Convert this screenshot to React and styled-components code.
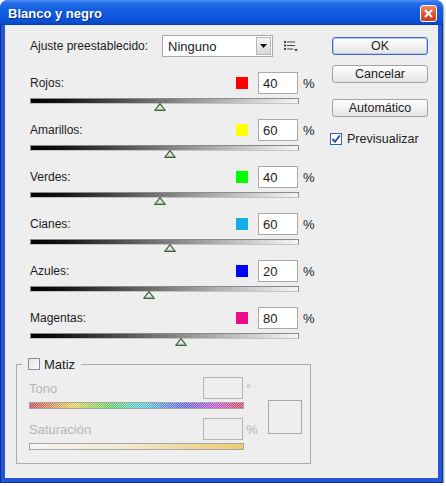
import React from 'react'
import styled, { createGlobalStyle } from 'styled-components'

const GlobalStyle = createGlobalStyle`
    html, body {
        margin: 0;
        background: #fff;
    }
    body {
        font-family: "Liberation Sans", Arial, sans-serif;
        font-size: 12px;
        color: #1c1c1c;
    }
`;

const channels = [
    { name: 'Rojos', color: '#ff0000', value: 40 },
    { name: 'Amarillos', color: '#ffff00', value: 60 },
    { name: 'Verdes', color: '#00ff00', value: 40 },
    { name: 'Cianes', color: '#12aee8', value: 60 },
    { name: 'Azules', color: '#0000ff', value: 20 },
    { name: 'Magentas', color: '#ec0c8c', value: 80 },
];

const Window = styled.div`
    width: 443px;
    height: 483px;
    display: flex;
    flex-direction: column;
    border-radius: 8px 8px 0 0;
    overflow: hidden;
    background: #2457d6;
    box-shadow: 1px 1px 2px rgba(0, 0, 0, 0.45);
`;

const TitleBar = styled.div`
    flex: none;
    height: 25px;
    display: flex;
    align-items: center;
    padding: 1px 6px 0 8px;
    box-sizing: border-box;
    background: linear-gradient(to bottom, #4a92f6 0%, #2a70ea 12%, #1460e2 35%, #0c56dc 70%, #0a4fd2 88%, #0a40b8 100%);
`;

const Title = styled.span`
    font-family: "Liberation Sans", Arial, sans-serif;
    font-weight: bold;
    font-size: 13px;
    color: #fff;
    text-shadow: 1px 1px 0 #0a2f8a;
`;

const CloseButton = styled.div`
    margin-left: auto;
    width: 17px;
    height: 17px;
    box-sizing: border-box;
    border: 1px solid #fff;
    border-radius: 3px;
    background: linear-gradient(to bottom, #ee8a66, #d8522c 60%, #c4401e);
    display: flex;
    align-items: center;
    justify-content: center;
`;

const Frame = styled.div`
    flex: 1;
    display: flex;
    padding: 0 4px 4px;
    border-left: 1px solid #0b2e9c;
    border-right: 1px solid #0b2e9c;
    border-bottom: 1px solid #0b2e9c;
    margin-top: -1px;
`;

const Body = styled.div`
    flex: 1;
    display: flex;
    align-items: flex-start;
    padding: 10px 0 0 11px;
    background: #eeeeee;
    border-top: 1px solid #0b3cb4;
`;

const Controls = styled.div`
    width: 297px;
    display: flex;
    flex-direction: column;
`;

const PresetRow = styled.div`
    display: flex;
    align-items: center;
    height: 22px;
    padding-left: 14px;
`;

const Label = styled.span`
    color: ${p => (p.disabled ? '#b6b6b6' : '#1c1c1c')};
    white-space: nowrap;
`;

const Select = styled.div`
    margin-left: 14px;
    width: 111px;
    height: 22px;
    box-sizing: border-box;
    border: 1px solid #a9a9a9;
    background: #fff;
    display: flex;
    align-items: center;
    padding: 0 1px 0 5px;
    font-size: 13px;
`;

const SelectArrow = styled.div`
    margin-left: auto;
    width: 15px;
    height: 18px;
    box-sizing: border-box;
    border: 1px solid #b8b8b8;
    background: linear-gradient(to bottom, #f6f6f6, #d8d8d8);
    display: flex;
    align-items: center;
    justify-content: center;
`;

const MenuIcon = styled.svg`
    margin-left: 11px;
`;

const ChannelList = styled.div`
    margin-top: 15px;
    display: flex;
    flex-direction: column;
    gap: 15px;
`;

const Channel = styled.div`
    padding-left: 14px;
`;

const ChannelHead = styled.div`
    width: 283px;
    height: 22px;
    display: flex;
    align-items: center;
`;

const Swatch = styled.span`
    margin-left: auto;
    width: 12px;
    height: 12px;
    background: ${p => p.color};
`;

const ValueBox = styled.div`
    margin-left: ${p => (p.gap !== undefined ? p.gap : 10)}px;
    width: 40px;
    height: 22px;
    box-sizing: border-box;
    border: 1px solid ${p => (p.disabled ? '#b4b4b4' : '#a9a9a9')};
    background: ${p => (p.disabled ? 'transparent' : '#fff')};
    padding: 0 4px;
    display: flex;
    align-items: center;
    font-size: 13px;
`;

const Unit = styled.span`
    margin-left: ${p => (p.gap ? p.gap : 5)}px;
    width: ${p => (p.w ? p.w : 10)}px;
    color: ${p => (p.disabled ? '#b6b6b6' : '#1c1c1c')};
    font-size: 13px;
`;

const Track = styled.div`
    position: relative;
    margin-top: 4px;
    width: 269px;
    height: 6px;
    box-sizing: border-box;
    border: 1px solid #8a8a8a;
    border-bottom-color: #c4c4c4;
    background: linear-gradient(to right, #000 0%, #141414 12%, #6e6e6e 45%, #b0b0b0 70%, #f6f6f6 100%);
`;

const Thumb = styled.svg`
    position: absolute;
    top: 4px;
    margin-left: -6px;
`;

const HueGroup = styled.fieldset`
    margin: 18px 0 0;
    width: 295px;
    box-sizing: border-box;
    border: 1px solid #acacac;
    padding: 6px 8px 13px 12px;
    min-inline-size: 0;
`;

const Legend = styled.legend`
    margin-left: -7px;
    padding: 0 6px;
    height: 14px;
    display: flex;
    align-items: center;
    gap: 4px;
    font-size: 13px;
`;

const Checkbox = styled.span`
    width: 12px;
    height: 12px;
    box-sizing: border-box;
    border: 1px solid ${p => (p.checked ? '#3b5da8' : '#7d8ca8')};
    background: ${p => (p.checked ? '#fff' : 'linear-gradient(135deg, #e4e4e4, #fafafa)')};
    display: flex;
    align-items: center;
    justify-content: center;
`;

const HueFields = styled.div`
    display: flex;
    align-items: center;
`;

const HueColumn = styled.div`
    width: 231px;
    display: flex;
    flex-direction: column;
`;

const HueRow = styled.div`
    height: 22px;
    display: flex;
    align-items: center;
    margin-top: ${p => (p.first ? 0 : 9)}px;
    font-size: 13px;
`;

const SpectrumBar = styled.div`
    margin-top: 3px;
    width: 215px;
    height: 7px;
    box-sizing: border-box;
    border: 1px solid #a6a6a6;
    background:
        repeating-conic-gradient(rgba(255, 255, 255, 0.55) 0 25%, transparent 0 50%) 0 0 / 2px 2px,
        ${p => p.gradient};
`;

const PreviewSwatch = styled.div`
    margin: 6px 0 0 8px;
    width: 34px;
    height: 34px;
    box-sizing: border-box;
    border: 1px solid #a8a8a8;
`;

const Actions = styled.div`
    margin: 2px 0 0 19px;
    width: 96px;
    display: flex;
    flex-direction: column;
`;

const Button = styled.div`
    height: 18px;
    box-sizing: border-box;
    margin-top: ${p => p.gap || 0}px;
    border: 1px solid ${p => (p.primary ? '#3d68c8' : '#a2a2a2')};
    border-radius: 3px;
    background: linear-gradient(to bottom, #fefefe, #f2f2f2 50%, #e4e4e4);
    box-shadow: ${p => (p.primary ? 'inset 0 0 0 1px #b6cdf4' : 'none')};
    display: flex;
    align-items: center;
    justify-content: center;
    font-size: 12.5px;
    color: #1c1c1c;
`;

const CheckRow = styled.div`
    margin-top: 15px;
    margin-left: -2px;
    display: flex;
    align-items: center;
    gap: 5px;
    font-size: 12.5px;
`;

const thumbLeft = value => ((value + 200) / 500) * 268;

const Dialog = () => {
    return (
        <Window>
            <TitleBar>
                <Title>Blanco y negro</Title>
                <CloseButton>
                    <svg width="9" height="9" viewBox="0 0 9 9">
                        <path d="M1 1 L8 8 M8 1 L1 8" stroke="#fff" strokeWidth="2" />
                    </svg>
                </CloseButton>
            </TitleBar>
            <Frame>
                <Body>
                    <Controls>
                        <PresetRow>
                            <Label>Ajuste preestablecido:</Label>
                            <Select>
                                Ninguno
                                <SelectArrow>
                                    <svg width="7" height="4" viewBox="0 0 7 4">
                                        <path d="M0 0 H7 L3.5 4 Z" fill="#111" />
                                    </svg>
                                </SelectArrow>
                            </Select>
                            <MenuIcon width="15" height="11" viewBox="0 0 15 11">
                                <rect x="0" y="0" width="2" height="2" fill="#444" />
                                <rect x="3" y="0.5" width="8" height="1" fill="#444" />
                                <rect x="0" y="3.5" width="2" height="2" fill="#444" />
                                <rect x="3" y="4" width="8" height="1" fill="#444" />
                                <rect x="0" y="7" width="2" height="2" fill="#444" />
                                <rect x="3" y="7.5" width="6" height="1" fill="#444" />
                                <path d="M10 8 H14 L12 10.5 Z" fill="#444" />
                            </MenuIcon>
                        </PresetRow>

                        <ChannelList>
                            {channels.map(c => (
                                <Channel key={c.name}>
                                    <ChannelHead>
                                        <Label>{c.name}:</Label>
                                        <Swatch color={c.color} />
                                        <ValueBox>{c.value}</ValueBox>
                                        <Unit>%</Unit>
                                    </ChannelHead>
                                    <Track>
                                        <Thumb width="12" height="8" viewBox="0 0 12 8" style={{ left: thumbLeft(c.value) }}>
                                            <path d="M6 0.7 L11.2 7.4 L0.8 7.4 Z" fill="#e4eedd" stroke="#3f5e3f" strokeWidth="1.2" strokeLinejoin="round" />
                                            <path d="M2.6 6.4 H9.4" stroke="#9cbc96" strokeWidth="1.2" />
                                        </Thumb>
                                    </Track>
                                </Channel>
                            ))}
                        </ChannelList>

                        <HueGroup>
                            <Legend>
                                <Checkbox />
                                Matiz
                            </Legend>
                            <HueFields>
                                <HueColumn>
                                    <HueRow first>
                                        <Label disabled>Tono</Label>
                                        <ValueBox disabled gap={0} style={{ marginLeft: 'auto' }} />
                                        <Unit disabled gap={3} w={14}>°</Unit>
                                    </HueRow>
                                    <SpectrumBar gradient="linear-gradient(to right, #c2303a, #e0c840 20%, #50c850 38%, #40c8d8 52%, #4c50e0 72%, #c040c8 88%, #d0304c)" />
                                    <HueRow>
                                        <Label disabled>Saturación</Label>
                                        <ValueBox disabled gap={0} style={{ marginLeft: 'auto' }} />
                                        <Unit disabled gap={3} w={14}>%</Unit>
                                    </HueRow>
                                    <SpectrumBar gradient="linear-gradient(to right, #f2f2f2, #eee0c0 45%, #e8b838)" />
                                </HueColumn>
                                <PreviewSwatch />
                            </HueFields>
                        </HueGroup>
                    </Controls>

                    <Actions>
                        <Button primary>OK</Button>
                        <Button gap={10}>Cancelar</Button>
                        <Button gap={16}>Automático</Button>
                        <CheckRow>
                            <Checkbox checked>
                                <svg width="10" height="10" viewBox="0 0 10 10">
                                    <path d="M1.5 5 L4 7.8 L8.8 1.5" fill="none" stroke="#2453b0" strokeWidth="2" />
                                </svg>
                            </Checkbox>
                            Previsualizar
                        </CheckRow>
                    </Actions>
                </Body>
            </Frame>
        </Window>
    )
}

const App = () => {
    return (
        <>
            <GlobalStyle />
            <Dialog />
        </>
    )
}

export default App;
